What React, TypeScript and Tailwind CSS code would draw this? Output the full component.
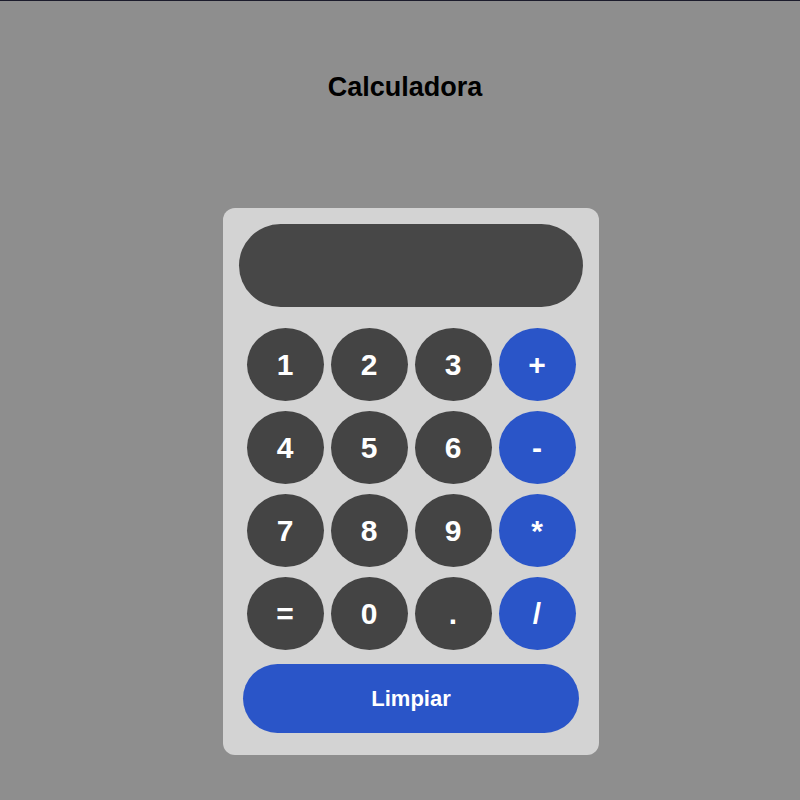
import React from "react";

const rows: { label: string; op?: boolean }[][] = [
  [{ label: "1" }, { label: "2" }, { label: "3" }, { label: "+", op: true }],
  [{ label: "4" }, { label: "5" }, { label: "6" }, { label: "-", op: true }],
  [{ label: "7" }, { label: "8" }, { label: "9" }, { label: "*", op: true }],
  [{ label: "=" }, { label: "0" }, { label: "." }, { label: "/", op: true }],
];

export default function App() {
  return (
    <div
      className="min-h-screen bg-[#8e8e8e] border-t border-[#1c1c2c] pt-[71px]"
      style={{ fontFamily: '"Liberation Sans", Arial, sans-serif' }}
    >
      <h1 className="text-center pl-[10px] text-[27px] font-bold text-black leading-[31px]">
        Calculadora
      </h1>
      <div className="flex justify-center pl-[22px] mt-[105px]">
        <div className="w-[376px] bg-[#d3d3d3] rounded-[12px] pt-[16px] pb-[22px] flex flex-col items-center">
          <div className="w-[344px] h-[83px] rounded-full bg-[#474747]" />
          <div className="mt-[21px] grid grid-cols-[repeat(4,77px)] gap-x-[7px] gap-y-[10px]">
            {rows.flat().map((b) => (
              <button
                key={b.label}
                className={`w-[77px] h-[73px] rounded-[50%] text-white font-bold text-[30px] flex items-center justify-center ${
                  b.op ? "bg-[#2a55c8]" : "bg-[#444444]"
                }`}
              >
                {b.label}
              </button>
            ))}
          </div>
          <button className="mt-[14px] w-[336px] h-[69px] rounded-full bg-[#2a55c8] text-white font-bold text-[22px]">
            Limpiar
          </button>
        </div>
      </div>
    </div>
  );
}
